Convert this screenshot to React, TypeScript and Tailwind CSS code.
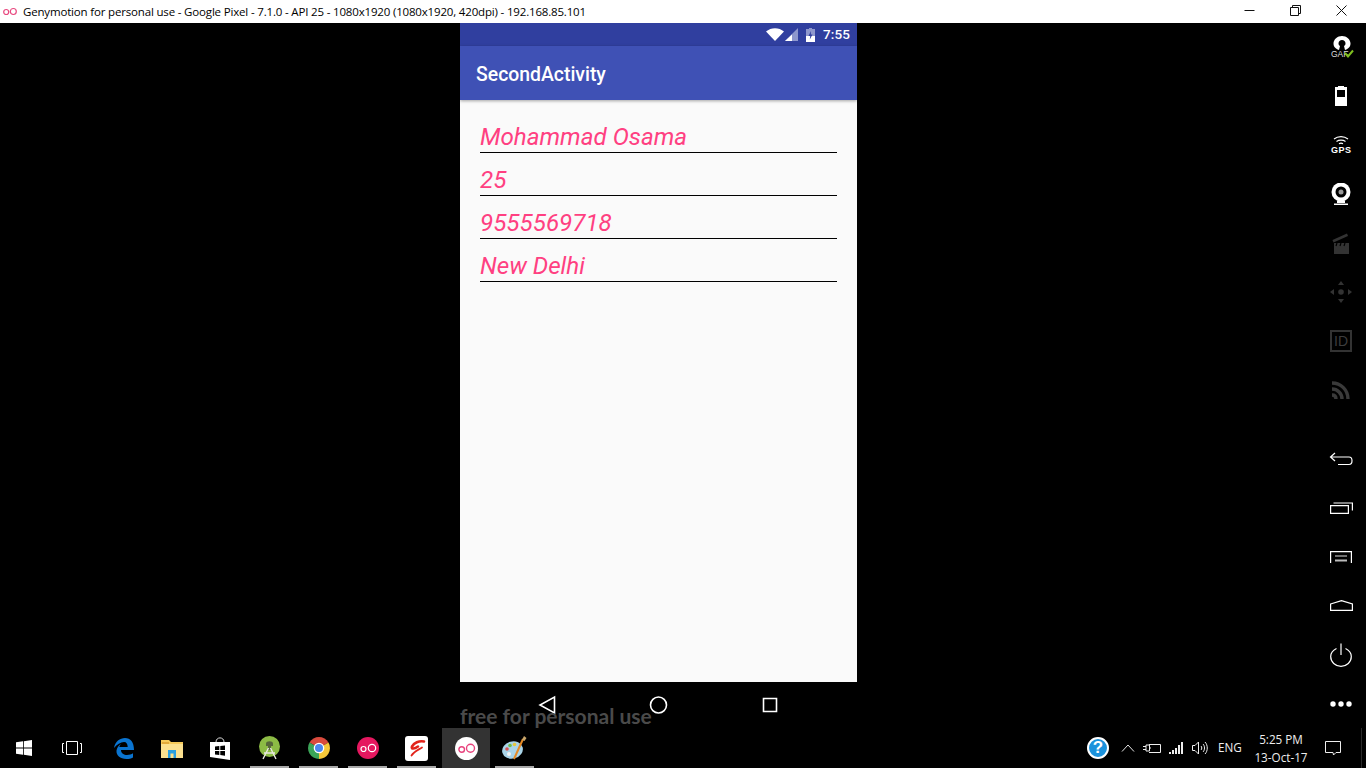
import type { ReactNode } from "react";

const fields = ["Mohammad Osama", "25", "9555569718", "New Delhi"];

function GenyLogo() {
  return (
    <svg width="14" height="9" viewBox="0 0 14 9" fill="none" stroke="#e8487f" strokeWidth="1.200">
      <circle cx="3.200" cy="5" r="2.500" />
      <circle cx="10.300" cy="4.500" r="3" />
    </svg>
  );
}

function TitleBar() {
  return (
    <div className="flex h-[23px] shrink-0 items-center bg-white pl-[3px] text-black">
      <GenyLogo />
      <span className="ml-[6px] font-['Open_Sans'] text-[11.5px] tracking-[-0.17px] whitespace-nowrap">
        Genymotion for personal use - Google Pixel - 7.1.0 - API 25 - 1080x1920 (1080x1920, 420dpi) - 192.168.85.101
      </span>
      <div className="ml-auto flex h-full items-center pb-[2px]">
        <div className="flex w-[46px] justify-center">
          <svg width="11" height="11" viewBox="0 0 11 11" stroke="#111" fill="none"><path d="M0.500 5.500H10.500" /></svg>
        </div>
        <div className="flex w-[46px] justify-center">
          <svg width="11" height="11" viewBox="0 0 11 11" stroke="#111" fill="none">
            <path d="M0.500 2.500H8.500V10.500H0.500Z" />
            <path d="M2.500 2.500V0.500H10.500V8.500H8.500" />
          </svg>
        </div>
        <div className="mr-[2px] flex w-[46px] justify-center">
          <svg width="11" height="11" viewBox="0 0 11 11" stroke="#111" fill="none"><path d="M0.500 0.500L10.500 10.500M10.500 0.500L0.500 10.500" /></svg>
        </div>
      </div>
    </div>
  );
}

function StatusBar() {
  return (
    <div className="flex h-[23px] items-center justify-end bg-[#303f9f] pr-[7px] text-white">
      <svg width="18" height="13" viewBox="0 0 18 13" className="mr-[1px]"><path d="M0 3.500C5 -1 13 -1 18 3.500L9 13Z" fill="#fff" /></svg>
      <svg width="13" height="13" viewBox="0 0 13 13" className="mr-[8px]">
        <path d="M13 0V13H0Z" fill="#8e97cd" />
        <path d="M7 6.500V13H0Z" fill="#fff" />
      </svg>
      <svg width="9" height="14" viewBox="0 0 9 14" className="mr-[8px]">
        <path d="M3 0H6V1H9V14H0V1H3Z" fill="#8e97cd" />
        <path d="M0 8H9V14H0Z" fill="#fff" />
        <path d="M5 3L2.500 8H4.200L3.800 11.500L6.500 6.500H4.800Z" fill="#303f9f" />
      </svg>
      <span className="font-['Roboto'] text-[13.5px] font-medium tracking-[0.1px]">7:55</span>
    </div>
  );
}

function Phone() {
  return (
    <div className="ml-[460px] flex w-[397px] shrink-0 flex-col">
      <StatusBar />
      <div className="relative z-10 flex h-[54px] items-center bg-[#3f51b5] pt-[4px] pl-[16px] shadow-[0_1px_3px_rgba(0,0,0,0.35)]">
        <span className="font-['Roboto'] text-[19.4px] font-medium text-white">SecondActivity</span>
      </div>
      <div className="flex h-[582px] flex-col bg-[#fafafa] px-[20px] pt-[10px]">
        {fields.map((f) => (
          <div key={f} className="flex h-[43px] items-end border-b border-black font-['Roboto'] text-[24.2px] leading-[30px] text-[#ff4081] italic">
            {f}
          </div>
        ))}
      </div>
      <div className="flex h-[46px] items-center justify-center gap-[91px]">
        <svg width="20" height="20" viewBox="0 0 20 20" fill="none" stroke="#fff" strokeWidth="1.600"><path d="M16.500 2V18L2 10Z" /></svg>
        <svg width="20" height="20" viewBox="0 0 20 20" fill="none" stroke="#fff" strokeWidth="1.600"><circle cx="9.500" cy="10" r="8" /></svg>
        <svg width="20" height="20" viewBox="0 0 20 20" fill="none" stroke="#fff" strokeWidth="1.600"><path d="M3.500 3.500H16.500V16.500H3.500Z" /></svg>
      </div>
    </div>
  );
}

function Side({ children }: { children: ReactNode }) {
  return <div className="flex h-[49px] items-center justify-center">{children}</div>;
}

function Sidebar() {
  return (
    <div className="ml-auto flex w-[50px] shrink-0 flex-col">
      <Side>
        <svg width="26" height="24" viewBox="0 0 26 24">
          <path d="M11 15C7 13.500 5.500 11.500 5.500 8.500C5.500 4.500 9.500 1 14 1C18.500 1 22.500 4.500 22.500 8.500C22.500 11.500 21 13.500 17 15L16 11C17 10.500 17.500 9.500 17.500 8.500C17.500 6.500 16 5 14 5C12 5 10.500 6.500 10.500 8.500C10.500 9.500 11 10.500 12 11Z" fill="#fff" />
          <text x="3" y="22" fontFamily="Liberation Sans" fontSize="8.500" fill="#ddd">GAF</text>
          <path d="M17 18L20 21.500L25 15.500" fill="none" stroke="#7fbf1f" strokeWidth="2" />
        </svg>
      </Side>
      <Side>
        <svg width="12" height="20" viewBox="0 0 12 20">
          <path d="M3 0H9V1H12V20H0V1H3Z" fill="#fff" />
          <path d="M2 4H10V11H2Z" fill="#000" />
        </svg>
      </Side>
      <Side>
        <svg width="22" height="20" viewBox="0 0 22 20">
          <path d="M4 4C8 0.800 14 0.800 18 4M6.500 6.500C9 4.700 13 4.700 15.500 6.500M9 8.700C10.200 8 11.800 8 13 8.700" fill="none" stroke="#fff" strokeWidth="1.100" />
          <text x="1" y="17.500" fontFamily="Liberation Sans" fontWeight="700" fontSize="9" fill="#fff" letterSpacing="0.500">GPS</text>
        </svg>
      </Side>
      <Side>
        <svg width="20" height="22" viewBox="0 0 20 22">
          <circle cx="10" cy="9" r="9.500" fill="#fff" />
          <circle cx="10" cy="9" r="5.500" fill="#000" />
          <circle cx="10" cy="9" r="2.500" fill="#999" />
          <path d="M6 18H14V20H6Z" fill="#fff" />
          <path d="M3 20.500H17V22H3Z" fill="#fff" />
        </svg>
      </Side>
      <Side>
        <svg width="18" height="21" viewBox="0 0 18 21">
          <path d="M2 10H17V21H2Z" fill="#333" />
          <path d="M0.500 7L15 0.500L16 3L1.500 9.500Z" fill="#333" />
          <path d="M5 10L4 13M9 10L8 13M13 10L12 13" stroke="#000" strokeWidth="1.200" />
        </svg>
      </Side>
      <Side>
        <svg width="22" height="22" viewBox="0 0 22 22" fill="#333">
          <path d="M11 0L14 4H8Z" />
          <path d="M11 22L14 18H8Z" />
          <path d="M0 11L4 8V14Z" />
          <path d="M22 11L18 8V14Z" />
          <circle cx="11" cy="11" r="2.800" />
        </svg>
      </Side>
      <Side>
        <div className="flex h-[22px] w-[22px] items-center justify-center border-2 border-[#333] font-['Liberation_Sans'] text-[14px] leading-none text-[#3d3d3d]">
          ID
        </div>
      </Side>
      <Side>
        <svg width="18" height="18" viewBox="0 0 18 18" fill="none" stroke="#3a3a3a" strokeWidth="3.400">
          <path d="M0 2C9 2 16 9 16 18" />
          <path d="M0 8C5.500 8 10 12.500 10 18" />
          <path d="M0 14C2.500 14 4 15.500 4 18" />
        </svg>
      </Side>
      <div className="h-[20px]" />
      <Side>
        <svg width="24" height="14" viewBox="0 0 24 14" fill="none" stroke="#fff" strokeWidth="1.200">
          <path d="M6 1L1.500 5L6 9M2 5H20C24 5 24 12.500 20 12.500H9" />
        </svg>
      </Side>
      <Side>
        <svg width="23" height="13" viewBox="0 0 23 13" fill="none" stroke="#fff" strokeWidth="1.200">
          <path d="M0.600 4.600H18.400V12.400H0.600Z" />
          <path d="M3.500 2H22.400V9.500" />
        </svg>
      </Side>
      <Side>
        <svg width="22" height="12" viewBox="0 0 22 12" fill="none" stroke="#fff" strokeWidth="1.200">
          <path d="M0.600 12V0.600H21.400V12" />
          <path d="M5 5H17" stroke="#ddd" strokeWidth="1" />
          <path d="M5 9.500H17" stroke="#bbb" strokeWidth="2" />
        </svg>
      </Side>
      <Side>
        <svg width="23" height="11" viewBox="0 0 23 11" fill="none" stroke="#fff" strokeWidth="1.200">
          <path d="M0.600 4L11.500 0.600L22.400 4V10.400H0.600Z" />
        </svg>
      </Side>
      <Side>
        <svg width="22" height="24" viewBox="0 0 22 24" fill="none" stroke="#fff" strokeWidth="1.200">
          <path d="M6.500 5.500C2.800 7.300 0.700 10.500 0.700 13.500C0.700 19 5.300 23.300 11 23.300C16.700 23.300 21.300 19 21.300 13.500C21.300 10.500 19.200 7.300 15.500 5.500" />
          <path d="M11 0.500V12" />
        </svg>
      </Side>
      <Side>
        <svg width="22" height="6" viewBox="0 0 22 6" fill="#fff">
          <circle cx="3" cy="3" r="2.700" />
          <circle cx="11" cy="3" r="2.700" />
          <circle cx="19" cy="3" r="2.700" />
        </svg>
      </Side>
    </div>
  );
}

function TaskIcon({ children, running }: { children: ReactNode; running?: boolean }) {
  return (
    <div className="relative flex h-full w-[49px] items-center justify-center">
      {children}
      {running && <span className="absolute right-[5px] bottom-0 left-[5px] h-[2px] bg-[#a8a8a8]" />}
    </div>
  );
}

function Taskbar() {
  return (
    <div className="flex h-[40px] shrink-0 items-center bg-black">
      <div className="flex h-full w-[48px] items-center justify-center">
        <svg width="16" height="16" viewBox="0 0 16 16" fill="#fff">
          <path d="M0 2.300L7 1.300V7.600H0Z" />
          <path d="M7.800 1.200L16 0V7.600H7.800Z" />
          <path d="M0 8.400H7V14.700L0 13.700Z" />
          <path d="M7.800 8.400H16V16L7.800 14.800Z" />
        </svg>
      </div>
      <div className="flex h-full w-[48px] items-center justify-center">
        <svg width="20" height="14" viewBox="0 0 20 14" fill="none" stroke="#fff">
          <path d="M4.500 0.500H15.500V13.500H4.500Z" />
          <path d="M2 2.500H0.500V11.500H2M18 2.500H19.500V11.500H18" />
        </svg>
      </div>
      <div className="ml-[4px] flex h-full w-[48px] items-center justify-center">
        <svg width="20" height="21" viewBox="0 0 20 21" fill="#0a74d0">
          <path d="M0 10C1 3.500 6 0 11 0C16.500 0 20 4 20 12H7C7 15.500 10 17 13 17C15.500 17 17.500 16.300 19 15.300V19.500C17 20.500 15 21 12.500 21C6 21 2 17 2.500 12.500C3 9.500 4.500 7.500 7 6C6 7 5.500 8 5.300 9H13.700C13.700 6 12.500 4 10 4C6.500 4 3 6.500 0 10Z" />
        </svg>
      </div>
      <div className="flex h-full w-[48px] items-center justify-center">
        <svg width="22" height="19" viewBox="0 0 22 19">
          <path d="M0 1H8L10 3H22V19H0Z" fill="#f5c95a" />
          <path d="M0 5H22V19H0Z" fill="#fbe08f" />
          <path d="M1 3H8V5H1Z" fill="#e2a93a" />
          <path d="M7 11H15V19H12.500V14.500H9.500V19H7Z" fill="#2a9fe0" />
        </svg>
      </div>
      <div className="flex h-full w-[48px] items-center justify-center">
        <svg width="20" height="24" viewBox="0 0 20 24">
          <path d="M6 6C6 0.500 14 0.500 14 6" fill="none" stroke="#ddd" strokeWidth="1" />
          <path d="M0 6H20V24L0 21Z" fill="#fff" />
          <path d="M5 10.500L9.300 10V14H5ZM10.300 10L15 9.500V14H10.300ZM5 15H9.300V19L5 18.500ZM10.300 15H15V19.700L10.300 19.100Z" fill="#000" />
        </svg>
      </div>
      <div className="ml-[1px] flex h-full">
        <TaskIcon running>
          <svg width="21" height="24" viewBox="0 0 21 24">
            <circle cx="10.500" cy="10.500" r="10.500" fill="#8cbb45" />
            <path d="M7 7.500C7 4.500 14 4.500 14 7.500V10H7Z" fill="#56663a" />
            <rect x="9" y="10" width="3" height="4" fill="#56663a" />
            <path d="M9.500 12L4 23M11.500 12L17 23M5 17H16" fill="none" stroke="#e8e8e0" strokeWidth="1.400" />
          </svg>
        </TaskIcon>
        <TaskIcon running>
          <svg width="22" height="22" viewBox="0 0 22 22">
            <path d="M11 11L1.500 5.500A11 11 0 0 1 20.500 5.500Z" fill="#d94a3d" />
            <path d="M11 11L20.500 5.500A11 11 0 0 1 11 22Z" fill="#f6c83a" />
            <path d="M11 11L11 22A11 11 0 0 1 1.500 5.500Z" fill="#3ba458" />
            <circle cx="11" cy="11" r="5.300" fill="#fff" />
            <circle cx="11" cy="11" r="4" fill="#4b87ee" />
          </svg>
        </TaskIcon>
        <TaskIcon running>
          <svg width="22" height="22" viewBox="0 0 22 22" fill="none">
            <circle cx="11" cy="11" r="11" fill="#e5175f" />
            <circle cx="6.500" cy="12" r="2.500" stroke="#fff" strokeWidth="1.200" />
            <circle cx="15" cy="11" r="3.700" stroke="#fff" strokeWidth="1.200" />
          </svg>
        </TaskIcon>
        <TaskIcon running>
          <div className="flex h-[25px] w-[23px] items-center justify-center rounded-[3px] bg-white">
            <svg width="18" height="18" viewBox="0 0 18 18" fill="none" stroke="#e2231a" strokeLinecap="round">
              <path d="M16 2.500C11 1.500 6 4 4 7.500C3 10 6 10.500 10 7.500" strokeWidth="2.600" />
              <path d="M14 8.500C10 11 6 12.500 3.500 16.500" strokeWidth="1.800" />
            </svg>
          </div>
        </TaskIcon>
        <div className="ml-[1px] w-[48px]">
          <div className="flex h-[40px] items-center justify-center bg-[#333333]">
            <svg width="23" height="23" viewBox="0 0 23 23" fill="none">
              <circle cx="11.500" cy="11.500" r="11.500" fill="#fff" />
              <circle cx="6.700" cy="12.500" r="2.800" stroke="#e8437d" strokeWidth="1.400" />
              <circle cx="15.500" cy="11.300" r="4" stroke="#e8437d" strokeWidth="1.400" />
            </svg>
          </div>
        </div>
        <TaskIcon running>
          <svg width="25" height="25" viewBox="0 0 25 25">
            <ellipse cx="10.500" cy="14" rx="10.500" ry="8.500" fill="#a9d4e8" transform="rotate(-15 10.500 14)" />
            <circle cx="5" cy="13" r="1.800" fill="#d85050" />
            <circle cx="8" cy="9.500" r="1.800" fill="#6dbb4a" />
            <circle cx="12.500" cy="8.500" r="1.800" fill="#e8c63c" />
            <circle cx="7" cy="18" r="2" fill="#f4f4f4" />
            <path d="M12 23L21 3" stroke="#e58a25" strokeWidth="2" />
            <path d="M20 4L22 0L24.500 2L22.500 5Z" fill="#c9a66b" />
          </svg>
        </TaskIcon>
      </div>
      <div className="ml-auto flex h-full items-center text-white">
        <div className="flex h-[22px] w-[22px] items-center justify-center rounded-full border-2 border-white bg-[#1b92dc] font-['Liberation_Sans'] text-[17px] font-bold">
          ?
        </div>
        <svg width="14" height="8" viewBox="0 0 14 8" fill="none" stroke="#e5e5e5" className="ml-[12px]"><path d="M1 7.500L7 1L13 7.500" /></svg>
        <svg width="18" height="12" viewBox="0 0 18 12" fill="none" stroke="#eee" className="ml-[8px]">
          <path d="M6 2.500H17.500V10.500H6" />
          <path d="M0 4.500H3M0 7.500H3M3 3H6.500V9H3ZM6 6H8" />
        </svg>
        <svg width="14" height="12" viewBox="0 0 14 12" fill="#eee" className="ml-[8px]">
          <rect x="0" y="10" width="2" height="2" />
          <rect x="3" y="8" width="2" height="4" />
          <rect x="6" y="6" width="2" height="6" />
          <rect x="9" y="3" width="2" height="9" />
          <rect x="12" y="0" width="2" height="12" />
        </svg>
        <svg width="16" height="14" viewBox="0 0 16 14" fill="none" stroke="#eee" className="ml-[9px]">
          <path d="M0.500 4.500H3L6.500 1V13L3 9.500H0.500Z" />
          <path d="M9 5C10 6 10 8 9 9M11 3C13 5 13 9 11 11M13 1C16 4 16 10 13 13" />
        </svg>
        <span className="ml-[10px] w-[24px] font-['Open_Sans'] text-[11.7px] whitespace-nowrap text-[#eee]">ENG</span>
        <div className="ml-[12px] flex w-[54px] flex-col items-center font-['Open_Sans'] text-[11.7px] leading-[18px] whitespace-nowrap text-[#eee]">
          <span>5:25 PM</span>
          <span>13-Oct-17</span>
        </div>
        <svg width="16" height="15" viewBox="0 0 16 15" fill="none" stroke="#eee" className="ml-[17px]">
          <path d="M0.500 0.500H15.500V11.500H11L8.500 14L8 11.500H0.500Z" />
        </svg>
        <span className="mr-[4px] ml-[20px] h-full w-px bg-[#2a2a2a]" />
      </div>
    </div>
  );
}

export default function App() {
  return (
    <div className="relative flex h-[768px] w-[1366px] flex-col overflow-hidden bg-black">
      <TitleBar />
      <div className="flex h-[705px] shrink-0 overflow-hidden">
        <Phone />
        <Sidebar />
      </div>
      <Taskbar />
      {/* watermark sits over the nav bar */}
      <span className="absolute top-[703px] left-[460px] font-['Lato'] text-[21px] leading-[26px] font-bold text-[#4a4a4a]">
        free for personal use
      </span>
    </div>
  );
}
